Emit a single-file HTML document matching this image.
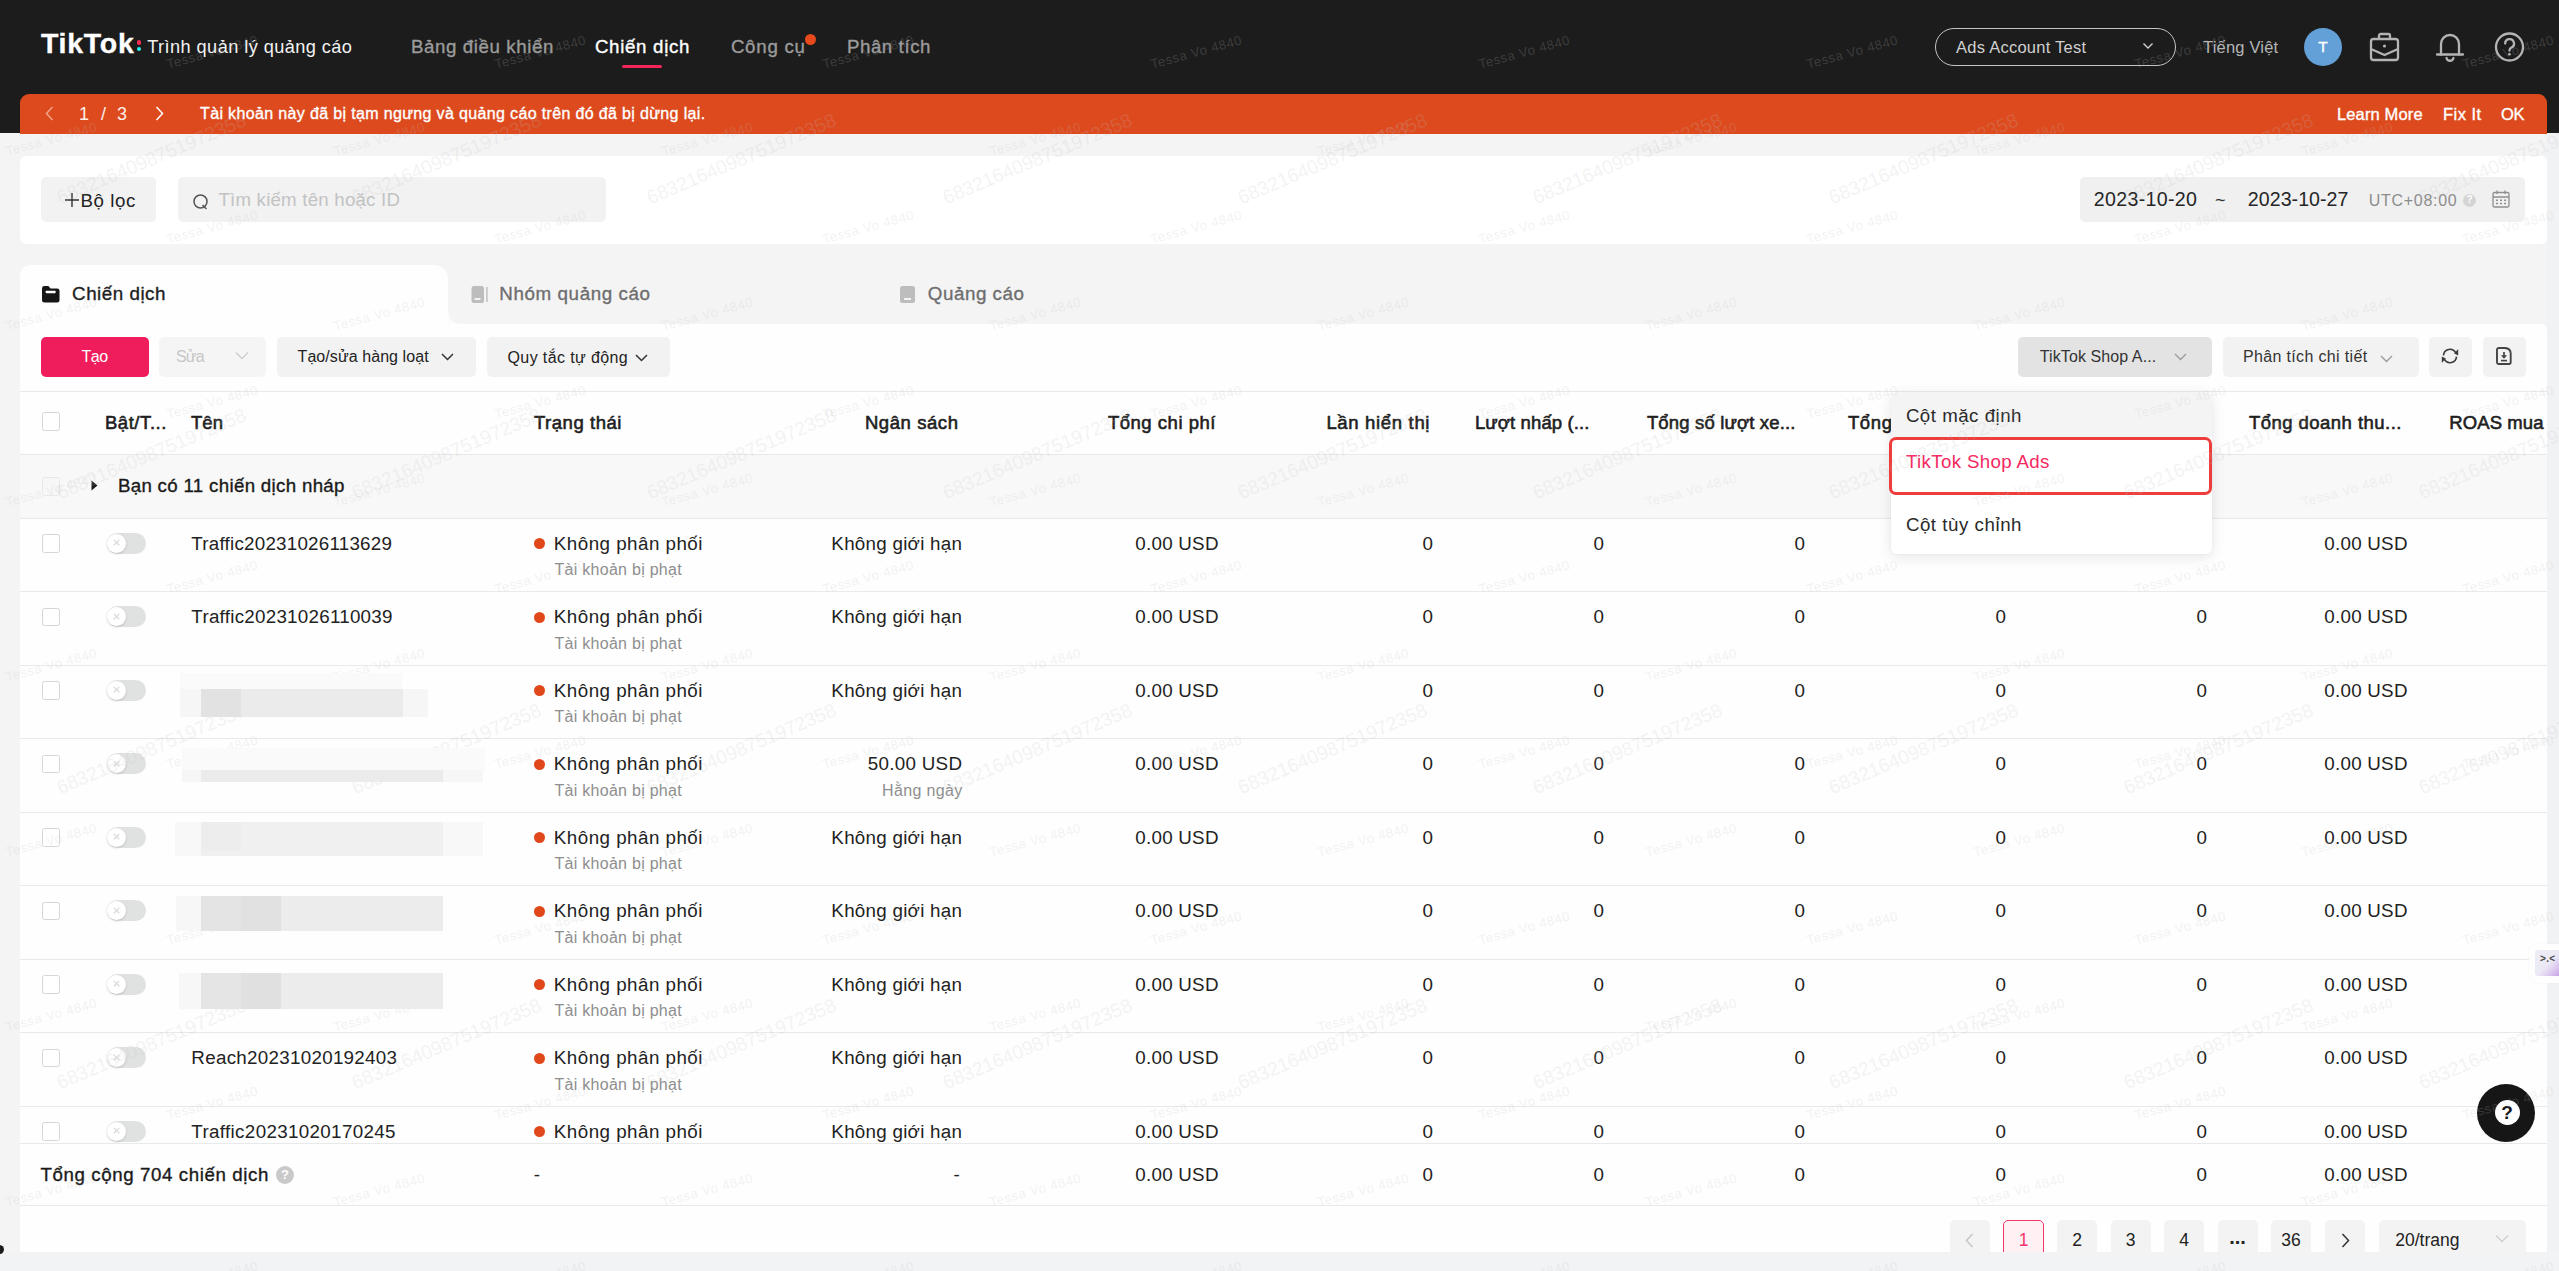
<!DOCTYPE html><html lang="vi"><head><meta charset="utf-8"><title>TikTok Ads Manager</title><style>
html,body{margin:0;padding:0}
body{width:2559px;height:1271px;overflow:hidden;position:relative;background:#f4f4f5;font-family:"Liberation Sans",sans-serif;}
.t{position:absolute;white-space:nowrap;}
.b{position:absolute;box-sizing:border-box;}
.m{-webkit-text-stroke:0.35px currentColor;}
.sb{-webkit-text-stroke:0.6px currentColor;}
svg{position:absolute;overflow:visible}
.wm{position:absolute;white-space:nowrap;transform-origin:left center;pointer-events:none;color:rgba(195,195,195,.23);}
</style></head><body>
<div class="b" style="left:0px;top:0px;width:2559px;height:133px;background:#1c1c1c;"></div>
<div class="t m" style="top:28.1px;font-size:28.5px;color:#fff;line-height:30px;font-weight:700;letter-spacing:0.756px;left:40.89px;">TikTok</div>
<div class="b" style="left:136.5px;top:40.4px;width:4.5px;height:4.5px;background:#fe2c55;border-radius:3px;"></div>
<div class="b" style="left:136.5px;top:46.5px;width:4.5px;height:4.5px;background:#25f4ee;border-radius:3px;"></div>
<div class="t" style="top:31.7px;font-size:18.2px;color:#f2f2f2;line-height:30px;letter-spacing:0.423px;left:147.21px;">Trình quản lý quảng cáo</div>
<div class="t m" style="top:31.5px;font-size:18.7px;color:#9b9b9b;line-height:30px;letter-spacing:0.611px;left:410.88px;">Bảng điều khiển</div>
<div class="t m" style="top:31.5px;font-size:18.7px;color:#fff;line-height:30px;letter-spacing:0.699px;left:594.88px;">Chiến dịch</div>
<div class="b" style="left:622px;top:65.4px;width:40px;height:2.9px;background:#f5245b;border-radius:1.5px;"></div>
<div class="t m" style="top:31.5px;font-size:18.7px;color:#9b9b9b;line-height:30px;letter-spacing:0.748px;left:730.88px;">Công cụ</div>
<div class="b" style="left:805px;top:34px;width:11px;height:11px;background:#e8491d;border-radius:6px;"></div>
<div class="t m" style="top:31.5px;font-size:18.7px;color:#9b9b9b;line-height:30px;letter-spacing:0.579px;left:846.88px;">Phân tích</div>
<div class="b" style="left:1935px;top:28px;width:241px;height:38px;background:transparent;border-radius:19px;border:1.5px solid #c4c4c4;"></div>
<div class="t" style="top:31.5px;font-size:16.5px;color:#d0d0d0;line-height:30px;letter-spacing:0.255px;left:1956.01px;">Ads Account Test</div>
<svg style="left:2142px;top:42px" width="12" height="8" viewBox="0 0 12 8"><path d="M1.5 1.5 L6 6 L10.5 1.5" fill="none" stroke="#cfcfcf" stroke-width="1.4"/></svg>
<div class="t" style="top:31.5px;font-size:16.5px;color:#b5b5b5;line-height:30px;letter-spacing:0.19px;left:2203.01px;">Tiếng Việt</div>
<div class="b" style="left:2304px;top:28px;width:38px;height:38px;background:#64a0d8;border-radius:19px;"></div>
<div class="t m" style="top:31.5px;font-size:15.5px;color:#fff;line-height:30px;left:2023px;width:600px;text-align:center;">T</div>
<svg style="left:2369px;top:31px" width="32" height="32" viewBox="0 0 32 32" fill="none" stroke="#b4b4b4" stroke-width="2.3" stroke-linejoin="round"><rect x="2" y="8" width="27" height="21" rx="2.5"/><path d="M10 8 V4.5 a1.5 1.5 0 0 1 1.5 -1.5 h8 a1.5 1.5 0 0 1 1.5 1.5 V8"/><path d="M2 18 L15.5 24 L29 18"/><circle cx="15.5" cy="15" r="1.6" fill="#b4b4b4" stroke="none"/></svg>
<svg style="left:2435px;top:31px" width="30" height="32" viewBox="0 0 30 32" fill="none" stroke="#b4b4b4" stroke-width="2.3" stroke-linecap="round" stroke-linejoin="round"><path d="M2 23.5 H28"/><path d="M6 23.5 V13 a9 9 0 0 1 18 0 V23.5"/><path d="M11.5 27 a3.6 3.6 0 0 0 7 0"/></svg>
<svg style="left:2494px;top:31px" width="32" height="32" viewBox="0 0 32 32" fill="none" stroke="#b4b4b4" stroke-width="2.3" stroke-linecap="round"><circle cx="15.5" cy="16" r="13.5"/><path d="M11.2 12.5 a4.4 4.4 0 1 1 6.3 4 c-1.3 0.7 -2 1.5 -2 3"/><circle cx="15.5" cy="23.2" r="1.3" fill="#b4b4b4" stroke="none"/></svg>
<div class="b" style="left:20px;top:94px;width:2527px;height:39.5px;background:#dd4a1d;border-radius:9px 9px 0 0;"></div>
<svg style="left:45px;top:106px" width="9" height="15" viewBox="0 0 9 15"><path d="M7.5 1 L1.5 7.5 L7.5 14" fill="none" stroke="#f0a58a" stroke-width="1.5"/></svg>
<div class="t" style="top:98.5px;font-size:18px;color:#fdeee8;line-height:30px;left:78.92px;">1</div>
<div class="t" style="top:98.5px;font-size:18px;color:#fdeee8;line-height:30px;left:100.92px;">/</div>
<div class="t" style="top:98.5px;font-size:18px;color:#fdeee8;line-height:30px;left:116.92px;">3</div>
<svg style="left:155px;top:106px" width="9" height="15" viewBox="0 0 9 15"><path d="M1.5 1 L7.5 7.5 L1.5 14" fill="none" stroke="#fff" stroke-width="1.5"/></svg>
<div class="t m" style="top:98.5px;font-size:16px;color:#fff;line-height:30px;letter-spacing:0.353px;left:200.04px;">Tài khoản này đã bị tạm ngưng và quảng cáo trên đó đã bị dừng lại.</div>
<div class="t m" style="top:98.5px;font-size:16.5px;color:#fff;line-height:30px;letter-spacing:0.134px;left:2337.01px;">Learn More</div>
<div class="t m" style="top:98.5px;font-size:16.5px;color:#fff;line-height:30px;letter-spacing:0.47px;left:2443.01px;">Fix It</div>
<div class="t m" style="top:98.5px;font-size:16.5px;color:#fff;line-height:30px;letter-spacing:-0.244px;left:2501.01px;">OK</div>
<div class="b" style="left:20px;top:155.5px;width:2527px;height:88px;background:#fff;border-radius:6px;"></div>
<div class="b" style="left:41px;top:177px;width:115px;height:44.5px;background:#f2f2f2;border-radius:5px;"></div>
<svg style="left:65.2px;top:192.8px" width="14" height="14" viewBox="0 0 14 14"><path d="M7 0 V14 M0 7 H14" stroke="#333" stroke-width="1.4" fill="none"/></svg>
<div class="t" style="top:185.5px;font-size:18.7px;color:#222;line-height:30px;letter-spacing:0.629px;left:80.38px;">Bộ lọc</div>
<div class="b" style="left:178px;top:177px;width:428px;height:44.5px;background:#f2f2f2;border-radius:5px;"></div>
<svg style="left:192px;top:193px" width="18" height="18" viewBox="0 0 18 18" fill="none" stroke="#555" stroke-width="1.5"><circle cx="8.5" cy="8.5" r="6.5"/><path d="M10.5 12 L14.5 16"/></svg>
<div class="t" style="top:184.5px;font-size:18.7px;color:#c2c2c2;line-height:30px;letter-spacing:0.211px;left:218.38px;">Tìm kiếm tên hoặc ID</div>
<div class="b" style="left:2080px;top:177px;width:445px;height:44.5px;background:#f0f0f0;border-radius:5px;"></div>
<div class="t" style="top:184.0px;font-size:19.6px;color:#262626;line-height:30px;letter-spacing:0.318px;left:2093.82px;">2023-10-20</div>
<div class="t" style="top:184.5px;font-size:18px;color:#333;line-height:30px;left:2214.92px;">~</div>
<div class="t" style="top:184.0px;font-size:19.6px;color:#262626;line-height:30px;letter-spacing:0.041px;left:2247.82px;">2023-10-27</div>
<div class="t" style="top:185.5px;font-size:16px;color:#8c8c8c;line-height:30px;letter-spacing:0.704px;left:2368.74px;">UTC+08:00</div>
<div class="b" style="left:2463px;top:193.5px;width:13px;height:13px;background:#d4d4d4;border-radius:7px;"></div>
<div class="t" style="top:185.0px;font-size:10px;color:#fff;line-height:30px;font-weight:700;left:2169.5px;width:600px;text-align:center;">?</div>
<svg style="left:2492px;top:190px" width="18" height="18" viewBox="0 0 18 18" fill="none" stroke="#8f8f8f" stroke-width="1.3"><rect x="1" y="2.5" width="16" height="14.5" rx="1.5"/><path d="M1 7 H17 M5 0.5 V4 M13 0.5 V4"/><path d="M4 10.2 h2 M8 10.2 h2 M12 10.2 h2 M4 13.5 h2 M8 13.5 h2 M12 13.5 h2" stroke-width="1.6"/></svg>
<div class="b" style="left:20px;top:265px;width:428px;height:62px;background:#fefefe;border-radius:10px 14px 0 0;"></div>
<svg style="left:448px;top:309px" width="15" height="15" viewBox="0 0 15 15"><path d="M0 0 C0 9 5 15 15 15 L0 15 Z" fill="#fcfcfc"/></svg>
<svg style="left:42.4px;top:285.2px" width="18" height="18" viewBox="0 0 19 19"><path d="M0 3.5 a2.5 2.5 0 0 1 2.5 -2.5 h4.2 l2.3 2.6 h7 a2.5 2.5 0 0 1 2.5 2.5 v9.9 a2.5 2.5 0 0 1 -2.5 2.5 h-13.5 a2.5 2.5 0 0 1 -2.5 -2.5 z" fill="#161616"/><rect x="4" y="6.2" width="10.3" height="2.5" rx="0.5" fill="#fff"/></svg>
<div class="t m" style="top:279.0px;font-size:18.8px;color:#1f1f1f;line-height:30px;letter-spacing:0.517px;left:72.07px;">Chiến dịch</div>
<svg style="left:471px;top:285px" width="19" height="19" viewBox="0 0 19 19"><rect x="0.5" y="1" width="12.5" height="17" rx="2.5" fill="#bdbdbd"/><rect x="3.5" y="13" width="6" height="2" fill="#f3f3f3"/><rect x="15" y="2" width="1.8" height="15" fill="#c9c9c9"/></svg>
<div class="t m" style="top:279.0px;font-size:18.8px;color:#6e6e6e;line-height:30px;letter-spacing:0.581px;left:499.37px;">Nhóm quảng cáo</div>
<svg style="left:899px;top:285px" width="17" height="19" viewBox="0 0 17 19"><rect x="1" y="1" width="15" height="17" rx="2.5" fill="#bdbdbd"/><rect x="5" y="13" width="7" height="2" fill="#f3f3f3"/></svg>
<div class="t m" style="top:279.0px;font-size:18.8px;color:#6e6e6e;line-height:30px;letter-spacing:0.526px;left:927.87px;">Quảng cáo</div>
<div class="b" style="left:20px;top:323.5px;width:2527px;height:929px;background:#fefefe;border-radius:0 6px 0 0;"></div>
<div class="b" style="left:41px;top:337px;width:107.5px;height:40px;background:#f01d5c;border-radius:5px;"></div>
<div class="t" style="top:342.0px;font-size:16px;color:#fff;line-height:30px;letter-spacing:-0.489px;left:81.54px;">Tạo</div>
<div class="b" style="left:159px;top:337px;width:107px;height:40px;background:#f5f5f5;border-radius:5px;"></div>
<div class="t" style="top:342.0px;font-size:16px;color:#c6c6c6;line-height:30px;letter-spacing:-0.841px;left:176.04px;">Sửa</div>
<svg style="left:235px;top:351px" width="14" height="9" viewBox="0 0 14 9"><path d="M1 1.5 L7 7.5 L13 1.5" fill="none" stroke="#cfcfcf" stroke-width="1.4"/></svg>
<div class="b" style="left:277px;top:337px;width:199px;height:40px;background:#f2f2f2;border-radius:5px;"></div>
<div class="t" style="top:342.0px;font-size:16px;color:#222;line-height:30px;letter-spacing:0.075px;left:297.54px;">Tạo/sửa hàng loạt</div>
<svg style="left:441px;top:353px" width="13" height="8" viewBox="0 0 13 8"><path d="M1 1 L6.5 6.5 L12 1" fill="none" stroke="#333" stroke-width="1.5"/></svg>
<div class="b" style="left:487px;top:337px;width:183px;height:40px;background:#f2f2f2;border-radius:5px;"></div>
<div class="t" style="top:343.0px;font-size:16px;color:#222;line-height:30px;letter-spacing:0.38px;left:507.54px;">Quy tắc tự động</div>
<svg style="left:635px;top:353.5px" width="13" height="8" viewBox="0 0 13 8"><path d="M1 1 L6.5 6.5 L12 1" fill="none" stroke="#333" stroke-width="1.5"/></svg>
<div class="b" style="left:2018px;top:337px;width:194px;height:40px;background:#e3e3e3;border-radius:5px;"></div>
<div class="t" style="top:342.0px;font-size:16px;color:#333;line-height:30px;letter-spacing:0.086px;left:2039.84px;">TikTok Shop A...</div>
<svg style="left:2174px;top:353px" width="13" height="8" viewBox="0 0 13 8"><path d="M1 1 L6.5 6.5 L12 1" fill="none" stroke="#9a9a9a" stroke-width="1.3"/></svg>
<div class="b" style="left:2223px;top:337px;width:195.5px;height:40px;background:#f2f2f2;border-radius:5px;"></div>
<div class="t" style="top:342.0px;font-size:16px;color:#333;line-height:30px;letter-spacing:0.341px;left:2243.04px;">Phân tích chi tiết</div>
<svg style="left:2380px;top:355px" width="13" height="8" viewBox="0 0 13 8"><path d="M1 1 L6.5 6.5 L12 1" fill="none" stroke="#9a9a9a" stroke-width="1.3"/></svg>
<div class="b" style="left:2429px;top:337px;width:43px;height:40px;background:#f2f2f2;border-radius:5px;"></div>
<svg style="left:2450.4px;top:355.8px" width="1" height="1" viewBox="0 0 1 1" fill="none" stroke="#3a3a3a" stroke-width="1.6"><path d="M-6.5 -0.6 A6.5 6.5 0 0 1 5.6 -3.4"/><path d="M6.5 0.6 A6.5 6.5 0 0 1 -5.6 3.4"/><path d="M8.2 -7 L8.2 -0.4 L4.2 -2.6 Z" fill="#3a3a3a" stroke="none"/><path d="M-8.2 7 L-8.2 0.4 L-4.2 2.6 Z" fill="#3a3a3a" stroke="none"/></svg>
<div class="b" style="left:2482.5px;top:337px;width:43px;height:40px;background:#f2f2f2;border-radius:5px;"></div>
<svg style="left:2495.9px;top:346.5px" width="16" height="18" viewBox="0 0 16 18" fill="none" stroke="#444" stroke-width="1.9" stroke-linejoin="round"><path d="M1 2.8 a1.8 1.8 0 0 1 1.8 -1.8 h6.2 q5.6 0.4 5.7 5.6 v8.6 a1.8 1.8 0 0 1 -1.8 1.8 h-10.1 a1.8 1.8 0 0 1 -1.8 -1.8 z"/><path d="M8 5 v4.5" stroke-width="1.7"/><path d="M4.9 8.3 h6.2 l-3.1 3.4 z" fill="#444" stroke="none"/><path d="M5 13.6 h6" stroke-width="1.6"/></svg>
<div class="b" style="left:20px;top:390.5px;width:2527px;height:1.3px;background:#e7e9eb;"></div>
<div class="b" style="left:41.5px;top:412px;width:18.5px;height:18.5px;background:#fff;border-radius:2.5px;border:1.4px solid #d3d7da;"></div>
<div class="t sb" style="top:407.5px;font-size:18.5px;color:#1f1f1f;line-height:30px;letter-spacing:0.575px;left:104.89px;">Bật/T...</div>
<div class="t sb" style="top:407.5px;font-size:18.5px;color:#1f1f1f;line-height:30px;letter-spacing:0.105px;left:190.89px;">Tên</div>
<div class="t sb" style="top:407.5px;font-size:18.5px;color:#1f1f1f;line-height:30px;letter-spacing:0.555px;left:533.89px;">Trạng thái</div>
<div class="t sb" style="top:407.5px;font-size:18.5px;color:#1f1f1f;line-height:30px;letter-spacing:0.581px;left:864.89px;">Ngân sách</div>
<div class="t sb" style="top:407.5px;font-size:18.5px;color:#1f1f1f;line-height:30px;letter-spacing:0.525px;left:1107.89px;">Tổng chi phí</div>
<div class="t sb" style="top:407.5px;font-size:18.5px;color:#1f1f1f;line-height:30px;letter-spacing:0.675px;left:1326.39px;">Lần hiển thị</div>
<div class="t sb" style="top:407.5px;font-size:18.5px;color:#1f1f1f;line-height:30px;letter-spacing:0.125px;left:1474.89px;">Lượt nhấp (...</div>
<div class="t sb" style="top:407.5px;font-size:18.5px;color:#1f1f1f;line-height:30px;letter-spacing:0.161px;left:1646.89px;">Tổng số lượt xe...</div>
<div class="t sb" style="top:407.5px;font-size:18.5px;color:#1f1f1f;line-height:30px;letter-spacing:0.643px;left:1847.89px;">Tổng</div>
<div class="t sb" style="top:407.5px;font-size:18.5px;color:#1f1f1f;line-height:30px;letter-spacing:0.473px;left:2248.89px;">Tổng doanh thu...</div>
<div class="t sb" style="top:407.5px;font-size:18.5px;color:#1f1f1f;line-height:30px;letter-spacing:0.091px;left:2449.29px;">ROAS mua</div>
<div class="b" style="left:20px;top:453.5px;width:2527px;height:1.3px;background:#e7e9eb;"></div>
<div class="b" style="left:20px;top:455px;width:2527px;height:63px;background:#f8f8f8;"></div>
<div class="b" style="left:41.5px;top:477px;width:18.5px;height:18.5px;background:#f7f7f7;border-radius:2.5px;border:1.4px solid #e6e8ea;"></div>
<svg style="left:91px;top:480px" width="7" height="11" viewBox="0 0 7 11"><path d="M0.5 0.5 L6.5 5.5 L0.5 10.5 Z" fill="#1a1a1a"/></svg>
<div class="t m" style="top:470.5px;font-size:18.7px;color:#1a1a1a;line-height:30px;letter-spacing:0.322px;left:117.88px;">Bạn có 11 chiến dịch nháp</div>
<div class="b" style="left:20px;top:517.5px;width:2527px;height:1.3px;background:#e7e9eb;"></div>
<div class="b" style="left:41.5px;top:534px;width:18.5px;height:18.5px;background:#fff;border-radius:2.5px;border:1.4px solid #d3d7da;"></div>
<div class="b" style="left:106.7px;top:532.5px;width:39px;height:21px;background:#e0e1e1;border-radius:11px;"></div>
<div class="b" style="left:106.7px;top:533.5px;width:19px;height:19px;background:#fff;border-radius:10px;box-shadow:0 1px 2.5px rgba(0,0,0,.16);"></div>
<svg style="left:112.6px;top:539.4px" width="7.2" height="7.2" viewBox="0 0 8 8"><path d="M1 1 L7 7 M7 1 L1 7" stroke="#dadada" stroke-width="1.4" fill="none"/></svg>
<div class="t" style="top:528.9px;font-size:18.8px;color:#222;line-height:30px;letter-spacing:0.226px;left:191.37px;">Traffic20231026113629</div>
<div class="b" style="left:534px;top:538.4px;width:11px;height:11px;background:#e0481c;border-radius:6px;"></div>
<div class="t" style="top:528.9px;font-size:18.8px;color:#222;line-height:30px;letter-spacing:0.468px;left:553.87px;">Không phân phối</div>
<div class="t" style="top:555.2px;font-size:16px;color:#8e8e8e;line-height:30px;letter-spacing:0.272px;left:554.54px;">Tài khoản bị phạt</div>
<div class="t" style="top:528.9px;font-size:18.8px;color:#222;line-height:30px;letter-spacing:0.262px;left:831.37px;">Không giới hạn</div>
<div class="t" style="top:528.9px;font-size:18.8px;color:#222;line-height:30px;letter-spacing:0.237px;left:1135.37px;">0.00 USD</div>
<div class="t" style="top:528.9px;font-size:18.8px;color:#222;line-height:30px;right:1126.07px;">0</div>
<div class="t" style="top:528.9px;font-size:18.8px;color:#222;line-height:30px;right:955.07px;">0</div>
<div class="t" style="top:528.9px;font-size:18.8px;color:#222;line-height:30px;right:754.07px;">0</div>
<div class="t" style="top:528.9px;font-size:18.8px;color:#222;line-height:30px;letter-spacing:0.237px;left:2324.37px;">0.00 USD</div>
<div class="b" style="left:20px;top:591.0px;width:2527px;height:1.3px;background:#e7e9eb;"></div>
<div class="b" style="left:41.5px;top:607.5px;width:18.5px;height:18.5px;background:#fff;border-radius:2.5px;border:1.4px solid #d3d7da;"></div>
<div class="b" style="left:106.7px;top:606.0px;width:39px;height:21px;background:#e0e1e1;border-radius:11px;"></div>
<div class="b" style="left:106.7px;top:607.0px;width:19px;height:19px;background:#fff;border-radius:10px;box-shadow:0 1px 2.5px rgba(0,0,0,.16);"></div>
<svg style="left:112.6px;top:612.9px" width="7.2" height="7.2" viewBox="0 0 8 8"><path d="M1 1 L7 7 M7 1 L1 7" stroke="#dadada" stroke-width="1.4" fill="none"/></svg>
<div class="t" style="top:602.4px;font-size:18.8px;color:#222;line-height:30px;letter-spacing:0.256px;left:191.37px;">Traffic20231026110039</div>
<div class="b" style="left:534px;top:611.9px;width:11px;height:11px;background:#e0481c;border-radius:6px;"></div>
<div class="t" style="top:602.4px;font-size:18.8px;color:#222;line-height:30px;letter-spacing:0.468px;left:553.87px;">Không phân phối</div>
<div class="t" style="top:628.7px;font-size:16px;color:#8e8e8e;line-height:30px;letter-spacing:0.272px;left:554.54px;">Tài khoản bị phạt</div>
<div class="t" style="top:602.4px;font-size:18.8px;color:#222;line-height:30px;letter-spacing:0.262px;left:831.37px;">Không giới hạn</div>
<div class="t" style="top:602.4px;font-size:18.8px;color:#222;line-height:30px;letter-spacing:0.237px;left:1135.37px;">0.00 USD</div>
<div class="t" style="top:602.4px;font-size:18.8px;color:#222;line-height:30px;right:1126.07px;">0</div>
<div class="t" style="top:602.4px;font-size:18.8px;color:#222;line-height:30px;right:955.07px;">0</div>
<div class="t" style="top:602.4px;font-size:18.8px;color:#222;line-height:30px;right:754.07px;">0</div>
<div class="t" style="top:602.4px;font-size:18.8px;color:#222;line-height:30px;right:553.07px;">0</div>
<div class="t" style="top:602.4px;font-size:18.8px;color:#222;line-height:30px;right:352.07px;">0</div>
<div class="t" style="top:602.4px;font-size:18.8px;color:#222;line-height:30px;letter-spacing:0.237px;left:2324.37px;">0.00 USD</div>
<div class="b" style="left:20px;top:664.5px;width:2527px;height:1.3px;background:#e7e9eb;"></div>
<div class="b" style="left:41.5px;top:681px;width:18.5px;height:18.5px;background:#fff;border-radius:2.5px;border:1.4px solid #d3d7da;"></div>
<div class="b" style="left:106.7px;top:679.5px;width:39px;height:21px;background:#e0e1e1;border-radius:11px;"></div>
<div class="b" style="left:106.7px;top:680.5px;width:19px;height:19px;background:#fff;border-radius:10px;box-shadow:0 1px 2.5px rgba(0,0,0,.16);"></div>
<svg style="left:112.6px;top:686.4px" width="7.2" height="7.2" viewBox="0 0 8 8"><path d="M1 1 L7 7 M7 1 L1 7" stroke="#dadada" stroke-width="1.4" fill="none"/></svg>
<div class="b" style="left:534px;top:685.4px;width:11px;height:11px;background:#e0481c;border-radius:6px;"></div>
<div class="t" style="top:675.9px;font-size:18.8px;color:#222;line-height:30px;letter-spacing:0.468px;left:553.87px;">Không phân phối</div>
<div class="t" style="top:702.2px;font-size:16px;color:#8e8e8e;line-height:30px;letter-spacing:0.272px;left:554.54px;">Tài khoản bị phạt</div>
<div class="t" style="top:675.9px;font-size:18.8px;color:#222;line-height:30px;letter-spacing:0.262px;left:831.37px;">Không giới hạn</div>
<div class="t" style="top:675.9px;font-size:18.8px;color:#222;line-height:30px;letter-spacing:0.237px;left:1135.37px;">0.00 USD</div>
<div class="t" style="top:675.9px;font-size:18.8px;color:#222;line-height:30px;right:1126.07px;">0</div>
<div class="t" style="top:675.9px;font-size:18.8px;color:#222;line-height:30px;right:955.07px;">0</div>
<div class="t" style="top:675.9px;font-size:18.8px;color:#222;line-height:30px;right:754.07px;">0</div>
<div class="t" style="top:675.9px;font-size:18.8px;color:#222;line-height:30px;right:553.07px;">0</div>
<div class="t" style="top:675.9px;font-size:18.8px;color:#222;line-height:30px;right:352.07px;">0</div>
<div class="t" style="top:675.9px;font-size:18.8px;color:#222;line-height:30px;letter-spacing:0.237px;left:2324.37px;">0.00 USD</div>
<div class="b" style="left:20px;top:738.0px;width:2527px;height:1.3px;background:#e7e9eb;"></div>
<div class="b" style="left:41.5px;top:754.5px;width:18.5px;height:18.5px;background:#fff;border-radius:2.5px;border:1.4px solid #d3d7da;"></div>
<div class="b" style="left:106.7px;top:753.0px;width:39px;height:21px;background:#e0e1e1;border-radius:11px;"></div>
<div class="b" style="left:106.7px;top:754.0px;width:19px;height:19px;background:#fff;border-radius:10px;box-shadow:0 1px 2.5px rgba(0,0,0,.16);"></div>
<svg style="left:112.6px;top:759.9px" width="7.2" height="7.2" viewBox="0 0 8 8"><path d="M1 1 L7 7 M7 1 L1 7" stroke="#dadada" stroke-width="1.4" fill="none"/></svg>
<div class="b" style="left:534px;top:758.9px;width:11px;height:11px;background:#e0481c;border-radius:6px;"></div>
<div class="t" style="top:749.4px;font-size:18.8px;color:#222;line-height:30px;letter-spacing:0.468px;left:553.87px;">Không phân phối</div>
<div class="t" style="top:775.7px;font-size:16px;color:#8e8e8e;line-height:30px;letter-spacing:0.272px;left:554.54px;">Tài khoản bị phạt</div>
<div class="t" style="top:749.4px;font-size:18.8px;color:#222;line-height:30px;letter-spacing:0.278px;left:867.87px;">50.00 USD</div>
<div class="t" style="top:775.7px;font-size:16px;color:#8e8e8e;line-height:30px;letter-spacing:0.339px;left:882.04px;">Hằng ngày</div>
<div class="t" style="top:749.4px;font-size:18.8px;color:#222;line-height:30px;letter-spacing:0.237px;left:1135.37px;">0.00 USD</div>
<div class="t" style="top:749.4px;font-size:18.8px;color:#222;line-height:30px;right:1126.07px;">0</div>
<div class="t" style="top:749.4px;font-size:18.8px;color:#222;line-height:30px;right:955.07px;">0</div>
<div class="t" style="top:749.4px;font-size:18.8px;color:#222;line-height:30px;right:754.07px;">0</div>
<div class="t" style="top:749.4px;font-size:18.8px;color:#222;line-height:30px;right:553.07px;">0</div>
<div class="t" style="top:749.4px;font-size:18.8px;color:#222;line-height:30px;right:352.07px;">0</div>
<div class="t" style="top:749.4px;font-size:18.8px;color:#222;line-height:30px;letter-spacing:0.237px;left:2324.37px;">0.00 USD</div>
<div class="b" style="left:20px;top:811.5px;width:2527px;height:1.3px;background:#e7e9eb;"></div>
<div class="b" style="left:41.5px;top:828px;width:18.5px;height:18.5px;background:#fff;border-radius:2.5px;border:1.4px solid #d3d7da;"></div>
<div class="b" style="left:106.7px;top:826.5px;width:39px;height:21px;background:#e0e1e1;border-radius:11px;"></div>
<div class="b" style="left:106.7px;top:827.5px;width:19px;height:19px;background:#fff;border-radius:10px;box-shadow:0 1px 2.5px rgba(0,0,0,.16);"></div>
<svg style="left:112.6px;top:833.4px" width="7.2" height="7.2" viewBox="0 0 8 8"><path d="M1 1 L7 7 M7 1 L1 7" stroke="#dadada" stroke-width="1.4" fill="none"/></svg>
<div class="b" style="left:534px;top:832.4px;width:11px;height:11px;background:#e0481c;border-radius:6px;"></div>
<div class="t" style="top:822.9px;font-size:18.8px;color:#222;line-height:30px;letter-spacing:0.468px;left:553.87px;">Không phân phối</div>
<div class="t" style="top:849.2px;font-size:16px;color:#8e8e8e;line-height:30px;letter-spacing:0.272px;left:554.54px;">Tài khoản bị phạt</div>
<div class="t" style="top:822.9px;font-size:18.8px;color:#222;line-height:30px;letter-spacing:0.262px;left:831.37px;">Không giới hạn</div>
<div class="t" style="top:822.9px;font-size:18.8px;color:#222;line-height:30px;letter-spacing:0.237px;left:1135.37px;">0.00 USD</div>
<div class="t" style="top:822.9px;font-size:18.8px;color:#222;line-height:30px;right:1126.07px;">0</div>
<div class="t" style="top:822.9px;font-size:18.8px;color:#222;line-height:30px;right:955.07px;">0</div>
<div class="t" style="top:822.9px;font-size:18.8px;color:#222;line-height:30px;right:754.07px;">0</div>
<div class="t" style="top:822.9px;font-size:18.8px;color:#222;line-height:30px;right:553.07px;">0</div>
<div class="t" style="top:822.9px;font-size:18.8px;color:#222;line-height:30px;right:352.07px;">0</div>
<div class="t" style="top:822.9px;font-size:18.8px;color:#222;line-height:30px;letter-spacing:0.237px;left:2324.37px;">0.00 USD</div>
<div class="b" style="left:20px;top:885.0px;width:2527px;height:1.3px;background:#e7e9eb;"></div>
<div class="b" style="left:41.5px;top:901.5px;width:18.5px;height:18.5px;background:#fff;border-radius:2.5px;border:1.4px solid #d3d7da;"></div>
<div class="b" style="left:106.7px;top:900.0px;width:39px;height:21px;background:#e0e1e1;border-radius:11px;"></div>
<div class="b" style="left:106.7px;top:901.0px;width:19px;height:19px;background:#fff;border-radius:10px;box-shadow:0 1px 2.5px rgba(0,0,0,.16);"></div>
<svg style="left:112.6px;top:906.9px" width="7.2" height="7.2" viewBox="0 0 8 8"><path d="M1 1 L7 7 M7 1 L1 7" stroke="#dadada" stroke-width="1.4" fill="none"/></svg>
<div class="b" style="left:534px;top:905.9px;width:11px;height:11px;background:#e0481c;border-radius:6px;"></div>
<div class="t" style="top:896.4px;font-size:18.8px;color:#222;line-height:30px;letter-spacing:0.468px;left:553.87px;">Không phân phối</div>
<div class="t" style="top:922.7px;font-size:16px;color:#8e8e8e;line-height:30px;letter-spacing:0.272px;left:554.54px;">Tài khoản bị phạt</div>
<div class="t" style="top:896.4px;font-size:18.8px;color:#222;line-height:30px;letter-spacing:0.262px;left:831.37px;">Không giới hạn</div>
<div class="t" style="top:896.4px;font-size:18.8px;color:#222;line-height:30px;letter-spacing:0.237px;left:1135.37px;">0.00 USD</div>
<div class="t" style="top:896.4px;font-size:18.8px;color:#222;line-height:30px;right:1126.07px;">0</div>
<div class="t" style="top:896.4px;font-size:18.8px;color:#222;line-height:30px;right:955.07px;">0</div>
<div class="t" style="top:896.4px;font-size:18.8px;color:#222;line-height:30px;right:754.07px;">0</div>
<div class="t" style="top:896.4px;font-size:18.8px;color:#222;line-height:30px;right:553.07px;">0</div>
<div class="t" style="top:896.4px;font-size:18.8px;color:#222;line-height:30px;right:352.07px;">0</div>
<div class="t" style="top:896.4px;font-size:18.8px;color:#222;line-height:30px;letter-spacing:0.237px;left:2324.37px;">0.00 USD</div>
<div class="b" style="left:20px;top:958.5px;width:2527px;height:1.3px;background:#e7e9eb;"></div>
<div class="b" style="left:41.5px;top:975px;width:18.5px;height:18.5px;background:#fff;border-radius:2.5px;border:1.4px solid #d3d7da;"></div>
<div class="b" style="left:106.7px;top:973.5px;width:39px;height:21px;background:#e0e1e1;border-radius:11px;"></div>
<div class="b" style="left:106.7px;top:974.5px;width:19px;height:19px;background:#fff;border-radius:10px;box-shadow:0 1px 2.5px rgba(0,0,0,.16);"></div>
<svg style="left:112.6px;top:980.4px" width="7.2" height="7.2" viewBox="0 0 8 8"><path d="M1 1 L7 7 M7 1 L1 7" stroke="#dadada" stroke-width="1.4" fill="none"/></svg>
<div class="b" style="left:534px;top:979.4px;width:11px;height:11px;background:#e0481c;border-radius:6px;"></div>
<div class="t" style="top:969.9px;font-size:18.8px;color:#222;line-height:30px;letter-spacing:0.468px;left:553.87px;">Không phân phối</div>
<div class="t" style="top:996.2px;font-size:16px;color:#8e8e8e;line-height:30px;letter-spacing:0.272px;left:554.54px;">Tài khoản bị phạt</div>
<div class="t" style="top:969.9px;font-size:18.8px;color:#222;line-height:30px;letter-spacing:0.262px;left:831.37px;">Không giới hạn</div>
<div class="t" style="top:969.9px;font-size:18.8px;color:#222;line-height:30px;letter-spacing:0.237px;left:1135.37px;">0.00 USD</div>
<div class="t" style="top:969.9px;font-size:18.8px;color:#222;line-height:30px;right:1126.07px;">0</div>
<div class="t" style="top:969.9px;font-size:18.8px;color:#222;line-height:30px;right:955.07px;">0</div>
<div class="t" style="top:969.9px;font-size:18.8px;color:#222;line-height:30px;right:754.07px;">0</div>
<div class="t" style="top:969.9px;font-size:18.8px;color:#222;line-height:30px;right:553.07px;">0</div>
<div class="t" style="top:969.9px;font-size:18.8px;color:#222;line-height:30px;right:352.07px;">0</div>
<div class="t" style="top:969.9px;font-size:18.8px;color:#222;line-height:30px;letter-spacing:0.237px;left:2324.37px;">0.00 USD</div>
<div class="b" style="left:20px;top:1032.0px;width:2527px;height:1.3px;background:#e7e9eb;"></div>
<div class="b" style="left:41.5px;top:1048.5px;width:18.5px;height:18.5px;background:#fff;border-radius:2.5px;border:1.4px solid #d3d7da;"></div>
<div class="b" style="left:106.7px;top:1047.0px;width:39px;height:21px;background:#e0e1e1;border-radius:11px;"></div>
<div class="b" style="left:106.7px;top:1048.0px;width:19px;height:19px;background:#fff;border-radius:10px;box-shadow:0 1px 2.5px rgba(0,0,0,.16);"></div>
<svg style="left:112.6px;top:1053.9px" width="7.2" height="7.2" viewBox="0 0 8 8"><path d="M1 1 L7 7 M7 1 L1 7" stroke="#dadada" stroke-width="1.4" fill="none"/></svg>
<div class="t" style="top:1043.4px;font-size:18.8px;color:#222;line-height:30px;letter-spacing:0.282px;left:191.37px;">Reach20231020192403</div>
<div class="b" style="left:534px;top:1052.9px;width:11px;height:11px;background:#e0481c;border-radius:6px;"></div>
<div class="t" style="top:1043.4px;font-size:18.8px;color:#222;line-height:30px;letter-spacing:0.468px;left:553.87px;">Không phân phối</div>
<div class="t" style="top:1069.7px;font-size:16px;color:#8e8e8e;line-height:30px;letter-spacing:0.272px;left:554.54px;">Tài khoản bị phạt</div>
<div class="t" style="top:1043.4px;font-size:18.8px;color:#222;line-height:30px;letter-spacing:0.262px;left:831.37px;">Không giới hạn</div>
<div class="t" style="top:1043.4px;font-size:18.8px;color:#222;line-height:30px;letter-spacing:0.237px;left:1135.37px;">0.00 USD</div>
<div class="t" style="top:1043.4px;font-size:18.8px;color:#222;line-height:30px;right:1126.07px;">0</div>
<div class="t" style="top:1043.4px;font-size:18.8px;color:#222;line-height:30px;right:955.07px;">0</div>
<div class="t" style="top:1043.4px;font-size:18.8px;color:#222;line-height:30px;right:754.07px;">0</div>
<div class="t" style="top:1043.4px;font-size:18.8px;color:#222;line-height:30px;right:553.07px;">0</div>
<div class="t" style="top:1043.4px;font-size:18.8px;color:#222;line-height:30px;right:352.07px;">0</div>
<div class="t" style="top:1043.4px;font-size:18.8px;color:#222;line-height:30px;letter-spacing:0.237px;left:2324.37px;">0.00 USD</div>
<div class="b" style="left:20px;top:1105.5px;width:2527px;height:1.3px;background:#e7e9eb;"></div>
<div class="b" style="left:41.5px;top:1122px;width:18.5px;height:18.5px;background:#fff;border-radius:2.5px;border:1.4px solid #d3d7da;"></div>
<div class="b" style="left:106.7px;top:1120.5px;width:39px;height:21px;background:#e0e1e1;border-radius:11px;"></div>
<div class="b" style="left:106.7px;top:1121.5px;width:19px;height:19px;background:#fff;border-radius:10px;box-shadow:0 1px 2.5px rgba(0,0,0,.16);"></div>
<svg style="left:112.6px;top:1127.4px" width="7.2" height="7.2" viewBox="0 0 8 8"><path d="M1 1 L7 7 M7 1 L1 7" stroke="#dadada" stroke-width="1.4" fill="none"/></svg>
<div class="t" style="top:1116.9px;font-size:18.8px;color:#222;line-height:30px;letter-spacing:0.336px;left:191.37px;">Traffic20231020170245</div>
<div class="b" style="left:534px;top:1126.4px;width:11px;height:11px;background:#e0481c;border-radius:6px;"></div>
<div class="t" style="top:1116.9px;font-size:18.8px;color:#222;line-height:30px;letter-spacing:0.468px;left:553.87px;">Không phân phối</div>
<div class="t" style="top:1116.9px;font-size:18.8px;color:#222;line-height:30px;letter-spacing:0.262px;left:831.37px;">Không giới hạn</div>
<div class="t" style="top:1116.9px;font-size:18.8px;color:#222;line-height:30px;letter-spacing:0.237px;left:1135.37px;">0.00 USD</div>
<div class="t" style="top:1116.9px;font-size:18.8px;color:#222;line-height:30px;right:1126.07px;">0</div>
<div class="t" style="top:1116.9px;font-size:18.8px;color:#222;line-height:30px;right:955.07px;">0</div>
<div class="t" style="top:1116.9px;font-size:18.8px;color:#222;line-height:30px;right:754.07px;">0</div>
<div class="t" style="top:1116.9px;font-size:18.8px;color:#222;line-height:30px;right:553.07px;">0</div>
<div class="t" style="top:1116.9px;font-size:18.8px;color:#222;line-height:30px;right:352.07px;">0</div>
<div class="t" style="top:1116.9px;font-size:18.8px;color:#222;line-height:30px;letter-spacing:0.237px;left:2324.37px;">0.00 USD</div>
<div class="b" style="left:20px;top:1143px;width:2527px;height:63px;background:#fefefe;"></div>
<div class="b" style="left:20px;top:1142.5px;width:2527px;height:1.3px;background:#e7e9eb;"></div>
<div class="b" style="left:20px;top:1205px;width:2527px;height:1.3px;background:#e7e9eb;"></div>
<div class="t m" style="top:1159.5px;font-size:18.7px;color:#1a1a1a;line-height:30px;letter-spacing:0.612px;left:40.38px;">Tổng cộng 704 chiến dịch</div>
<div class="b" style="left:276px;top:1165.5px;width:18px;height:18px;background:#c9c9c9;border-radius:9px;"></div>
<div class="t" style="top:1159.5px;font-size:13px;color:#fff;line-height:30px;font-weight:700;left:-15px;width:600px;text-align:center;">?</div>
<div class="t" style="top:1159.5px;font-size:18.8px;color:#222;line-height:30px;left:533.87px;">-</div>
<div class="t" style="top:1159.5px;font-size:18.8px;color:#222;line-height:30px;right:1599.37px;">-</div>
<div class="t" style="top:1159.5px;font-size:18.8px;color:#222;line-height:30px;letter-spacing:0.237px;left:1135.37px;">0.00 USD</div>
<div class="t" style="top:1159.5px;font-size:18.8px;color:#222;line-height:30px;right:1126.07px;">0</div>
<div class="t" style="top:1159.5px;font-size:18.8px;color:#222;line-height:30px;right:955.07px;">0</div>
<div class="t" style="top:1159.5px;font-size:18.8px;color:#222;line-height:30px;right:754.07px;">0</div>
<div class="t" style="top:1159.5px;font-size:18.8px;color:#222;line-height:30px;right:553.07px;">0</div>
<div class="t" style="top:1159.5px;font-size:18.8px;color:#222;line-height:30px;right:352.07px;">0</div>
<div class="t" style="top:1159.5px;font-size:18.8px;color:#222;line-height:30px;letter-spacing:0.237px;left:2324.37px;">0.00 USD</div>
<div class="b" style="left:1950px;top:1220px;width:40px;height:40px;background:#f3f3f3;border-radius:5px;"></div>
<svg style="left:1965px;top:1233px" width="9" height="15" viewBox="0 0 9 15"><path d="M7.5 1 L1.5 7.5 L7.5 14" fill="none" stroke="#c6c6c6" stroke-width="1.5"/></svg>
<div class="b" style="left:2003px;top:1220px;width:40.5px;height:40px;background:#fff0f3;border-radius:5px;border:1.5px solid #f5366b;"></div>
<div class="t" style="top:1224.5px;font-size:17.5px;color:#f5366b;line-height:30px;left:1723.5px;width:600px;text-align:center;">1</div>
<div class="b" style="left:2057px;top:1220px;width:40px;height:40px;background:#f3f3f3;border-radius:5px;"></div>
<div class="t" style="top:1224.5px;font-size:17.5px;color:#222;line-height:30px;left:1777px;width:600px;text-align:center;">2</div>
<div class="b" style="left:2110.5px;top:1220px;width:40px;height:40px;background:#f3f3f3;border-radius:5px;"></div>
<div class="t" style="top:1224.5px;font-size:17.5px;color:#222;line-height:30px;left:1830.5px;width:600px;text-align:center;">3</div>
<div class="b" style="left:2164px;top:1220px;width:40px;height:40px;background:#f3f3f3;border-radius:5px;"></div>
<div class="t" style="top:1224.5px;font-size:17.5px;color:#222;line-height:30px;left:1884px;width:600px;text-align:center;">4</div>
<div class="b" style="left:2271px;top:1220px;width:40px;height:40px;background:#f3f3f3;border-radius:5px;"></div>
<div class="t" style="top:1224.5px;font-size:17.5px;color:#222;line-height:30px;left:1991px;width:600px;text-align:center;">36</div>
<div class="b" style="left:2217.5px;top:1220px;width:40px;height:40px;background:#f3f3f3;border-radius:5px;"></div>
<div class="t" style="top:1222.0px;font-size:20px;color:#222;line-height:30px;font-weight:700;left:1937.5px;width:600px;text-align:center;">...</div>
<div class="b" style="left:2325px;top:1220px;width:40px;height:40px;background:#f3f3f3;border-radius:5px;"></div>
<svg style="left:2341px;top:1233px" width="9" height="15" viewBox="0 0 9 15"><path d="M1.5 1 L7.5 7.5 L1.5 14" fill="none" stroke="#333" stroke-width="1.5"/></svg>
<div class="b" style="left:2378.5px;top:1220px;width:147px;height:40px;background:#f3f3f3;border-radius:5px;"></div>
<div class="t" style="top:1224.5px;font-size:17.5px;color:#222;line-height:30px;letter-spacing:0.012px;left:2395.25px;">20/trang</div>
<svg style="left:2495px;top:1234px" width="14" height="9" viewBox="0 0 14 9"><path d="M1 1.5 L7 7.5 L13 1.5" fill="none" stroke="#cfcfcf" stroke-width="1.4"/></svg>
<div class="b" style="left:1891px;top:392.5px;width:321px;height:161.5px;background:#fff;border-radius:6px;box-shadow:0 3px 14px rgba(0,0,0,.10),0 0 2px rgba(0,0,0,.06);"></div>
<div class="b" style="left:1891px;top:392.5px;width:321px;height:44.5px;background:#f4f4f4;border-radius:6px 6px 0 0;"></div>
<div class="t" style="top:401.4px;font-size:18.7px;color:#2a2a2a;line-height:30px;letter-spacing:0.499px;left:1905.88px;">Cột mặc định</div>
<div class="b" style="left:1889px;top:437px;width:323px;height:58px;background:#fff;border-radius:7px;border:3px solid #ee3d3d;"></div>
<div class="t" style="top:446.8px;font-size:18.7px;color:#f5285f;line-height:30px;letter-spacing:0.364px;left:1905.88px;">TikTok Shop Ads</div>
<div class="t" style="top:509.5px;font-size:18.7px;color:#2a2a2a;line-height:30px;letter-spacing:0.543px;left:1905.88px;">Cột tùy chỉnh</div>
<div class="b" style="left:2547px;top:133px;width:12px;height:1138px;background:#f1f2f4;"></div>
<div class="b" style="left:0px;top:1251.8px;width:2559px;height:19.2px;background:#f2f3f5;"></div>
<div class="b" style="left:-5px;top:1244.5px;width:9px;height:9px;background:#1c1c1c;border-radius:5px;"></div>
<div class="b" style="left:2477px;top:1084px;width:58px;height:58px;background:#161616;border-radius:29px;"></div>
<div class="b" style="left:2494.5px;top:1100px;width:25px;height:25px;background:#fff;border-radius:13px;"></div>
<div class="t" style="top:1098.0px;font-size:19px;color:#161616;line-height:30px;font-weight:700;left:2207px;width:600px;text-align:center;">?</div>
<div class="b" style="left:2529px;top:943.5px;width:30px;height:39.5px;background:#fefefe;border-radius:6px 0 0 6px;box-shadow:0 0 3px rgba(0,0,0,.04);"></div>
<div class="b" style="left:2535.2px;top:950px;width:24px;height:26.3px;background:linear-gradient(135deg,#eeeef6 0%,#ebe9f5 55%,#d9c2ee 82%,#c9a2e6 100%);border-radius:3px 0 0 3px;"></div>
<div class="t" style="top:943.5px;font-size:10px;color:#4a4a4a;line-height:30px;font-weight:700;letter-spacing:0.3px;left:2247.8px;width:600px;text-align:center;">&gt;.&lt;</div>
<div class="wm" style="left:6.0px;top:-38.1px;font-size:13.2px;line-height:30px;letter-spacing:0.6px;transform:rotate(-15.3deg);opacity:.88;">Tessa Vo 4840</div>
<div class="wm" style="left:334.0px;top:-38.1px;font-size:13.2px;line-height:30px;letter-spacing:0.6px;transform:rotate(-15.3deg);opacity:.88;">Tessa Vo 4840</div>
<div class="wm" style="left:662.0px;top:-38.1px;font-size:13.2px;line-height:30px;letter-spacing:0.6px;transform:rotate(-15.3deg);opacity:.88;">Tessa Vo 4840</div>
<div class="wm" style="left:990.0px;top:-38.1px;font-size:13.2px;line-height:30px;letter-spacing:0.6px;transform:rotate(-15.3deg);opacity:.88;">Tessa Vo 4840</div>
<div class="wm" style="left:1318.0px;top:-38.1px;font-size:13.2px;line-height:30px;letter-spacing:0.6px;transform:rotate(-15.3deg);opacity:.88;">Tessa Vo 4840</div>
<div class="wm" style="left:1646.0px;top:-38.1px;font-size:13.2px;line-height:30px;letter-spacing:0.6px;transform:rotate(-15.3deg);opacity:.88;">Tessa Vo 4840</div>
<div class="wm" style="left:1974.0px;top:-38.1px;font-size:13.2px;line-height:30px;letter-spacing:0.6px;transform:rotate(-15.3deg);opacity:.88;">Tessa Vo 4840</div>
<div class="wm" style="left:2302.0px;top:-38.1px;font-size:13.2px;line-height:30px;letter-spacing:0.6px;transform:rotate(-15.3deg);opacity:.88;">Tessa Vo 4840</div>
<div class="wm" style="left:167.0px;top:49.5px;font-size:13.2px;line-height:30px;letter-spacing:0.6px;transform:rotate(-15.3deg);opacity:.88;">Tessa Vo 4840</div>
<div class="wm" style="left:495.0px;top:49.5px;font-size:13.2px;line-height:30px;letter-spacing:0.6px;transform:rotate(-15.3deg);opacity:.88;">Tessa Vo 4840</div>
<div class="wm" style="left:823.0px;top:49.5px;font-size:13.2px;line-height:30px;letter-spacing:0.6px;transform:rotate(-15.3deg);opacity:.88;">Tessa Vo 4840</div>
<div class="wm" style="left:1151.0px;top:49.5px;font-size:13.2px;line-height:30px;letter-spacing:0.6px;transform:rotate(-15.3deg);opacity:.88;">Tessa Vo 4840</div>
<div class="wm" style="left:1479.0px;top:49.5px;font-size:13.2px;line-height:30px;letter-spacing:0.6px;transform:rotate(-15.3deg);opacity:.88;">Tessa Vo 4840</div>
<div class="wm" style="left:1807.0px;top:49.5px;font-size:13.2px;line-height:30px;letter-spacing:0.6px;transform:rotate(-15.3deg);opacity:.88;">Tessa Vo 4840</div>
<div class="wm" style="left:2135.0px;top:49.5px;font-size:13.2px;line-height:30px;letter-spacing:0.6px;transform:rotate(-15.3deg);opacity:.88;">Tessa Vo 4840</div>
<div class="wm" style="left:2463.0px;top:49.5px;font-size:13.2px;line-height:30px;letter-spacing:0.6px;transform:rotate(-15.3deg);opacity:.88;">Tessa Vo 4840</div>
<div class="wm" style="left:6.0px;top:137.1px;font-size:13.2px;line-height:30px;letter-spacing:0.6px;transform:rotate(-15.3deg);opacity:.88;">Tessa Vo 4840</div>
<div class="wm" style="left:334.0px;top:137.1px;font-size:13.2px;line-height:30px;letter-spacing:0.6px;transform:rotate(-15.3deg);opacity:.88;">Tessa Vo 4840</div>
<div class="wm" style="left:662.0px;top:137.1px;font-size:13.2px;line-height:30px;letter-spacing:0.6px;transform:rotate(-15.3deg);opacity:.88;">Tessa Vo 4840</div>
<div class="wm" style="left:990.0px;top:137.1px;font-size:13.2px;line-height:30px;letter-spacing:0.6px;transform:rotate(-15.3deg);opacity:.88;">Tessa Vo 4840</div>
<div class="wm" style="left:1318.0px;top:137.1px;font-size:13.2px;line-height:30px;letter-spacing:0.6px;transform:rotate(-15.3deg);opacity:.88;">Tessa Vo 4840</div>
<div class="wm" style="left:1646.0px;top:137.1px;font-size:13.2px;line-height:30px;letter-spacing:0.6px;transform:rotate(-15.3deg);opacity:.88;">Tessa Vo 4840</div>
<div class="wm" style="left:1974.0px;top:137.1px;font-size:13.2px;line-height:30px;letter-spacing:0.6px;transform:rotate(-15.3deg);opacity:.88;">Tessa Vo 4840</div>
<div class="wm" style="left:2302.0px;top:137.1px;font-size:13.2px;line-height:30px;letter-spacing:0.6px;transform:rotate(-15.3deg);opacity:.88;">Tessa Vo 4840</div>
<div class="wm" style="left:167.0px;top:224.7px;font-size:13.2px;line-height:30px;letter-spacing:0.6px;transform:rotate(-15.3deg);opacity:.88;">Tessa Vo 4840</div>
<div class="wm" style="left:495.0px;top:224.7px;font-size:13.2px;line-height:30px;letter-spacing:0.6px;transform:rotate(-15.3deg);opacity:.88;">Tessa Vo 4840</div>
<div class="wm" style="left:823.0px;top:224.7px;font-size:13.2px;line-height:30px;letter-spacing:0.6px;transform:rotate(-15.3deg);opacity:.88;">Tessa Vo 4840</div>
<div class="wm" style="left:1151.0px;top:224.7px;font-size:13.2px;line-height:30px;letter-spacing:0.6px;transform:rotate(-15.3deg);opacity:.88;">Tessa Vo 4840</div>
<div class="wm" style="left:1479.0px;top:224.7px;font-size:13.2px;line-height:30px;letter-spacing:0.6px;transform:rotate(-15.3deg);opacity:.88;">Tessa Vo 4840</div>
<div class="wm" style="left:1807.0px;top:224.7px;font-size:13.2px;line-height:30px;letter-spacing:0.6px;transform:rotate(-15.3deg);opacity:.88;">Tessa Vo 4840</div>
<div class="wm" style="left:2135.0px;top:224.7px;font-size:13.2px;line-height:30px;letter-spacing:0.6px;transform:rotate(-15.3deg);opacity:.88;">Tessa Vo 4840</div>
<div class="wm" style="left:2463.0px;top:224.7px;font-size:13.2px;line-height:30px;letter-spacing:0.6px;transform:rotate(-15.3deg);opacity:.88;">Tessa Vo 4840</div>
<div class="wm" style="left:6.0px;top:312.3px;font-size:13.2px;line-height:30px;letter-spacing:0.6px;transform:rotate(-15.3deg);opacity:.88;">Tessa Vo 4840</div>
<div class="wm" style="left:334.0px;top:312.3px;font-size:13.2px;line-height:30px;letter-spacing:0.6px;transform:rotate(-15.3deg);opacity:.88;">Tessa Vo 4840</div>
<div class="wm" style="left:662.0px;top:312.3px;font-size:13.2px;line-height:30px;letter-spacing:0.6px;transform:rotate(-15.3deg);opacity:.88;">Tessa Vo 4840</div>
<div class="wm" style="left:990.0px;top:312.3px;font-size:13.2px;line-height:30px;letter-spacing:0.6px;transform:rotate(-15.3deg);opacity:.88;">Tessa Vo 4840</div>
<div class="wm" style="left:1318.0px;top:312.3px;font-size:13.2px;line-height:30px;letter-spacing:0.6px;transform:rotate(-15.3deg);opacity:.88;">Tessa Vo 4840</div>
<div class="wm" style="left:1646.0px;top:312.3px;font-size:13.2px;line-height:30px;letter-spacing:0.6px;transform:rotate(-15.3deg);opacity:.88;">Tessa Vo 4840</div>
<div class="wm" style="left:1974.0px;top:312.3px;font-size:13.2px;line-height:30px;letter-spacing:0.6px;transform:rotate(-15.3deg);opacity:.88;">Tessa Vo 4840</div>
<div class="wm" style="left:2302.0px;top:312.3px;font-size:13.2px;line-height:30px;letter-spacing:0.6px;transform:rotate(-15.3deg);opacity:.88;">Tessa Vo 4840</div>
<div class="wm" style="left:167.0px;top:399.9px;font-size:13.2px;line-height:30px;letter-spacing:0.6px;transform:rotate(-15.3deg);opacity:.88;">Tessa Vo 4840</div>
<div class="wm" style="left:495.0px;top:399.9px;font-size:13.2px;line-height:30px;letter-spacing:0.6px;transform:rotate(-15.3deg);opacity:.88;">Tessa Vo 4840</div>
<div class="wm" style="left:823.0px;top:399.9px;font-size:13.2px;line-height:30px;letter-spacing:0.6px;transform:rotate(-15.3deg);opacity:.88;">Tessa Vo 4840</div>
<div class="wm" style="left:1151.0px;top:399.9px;font-size:13.2px;line-height:30px;letter-spacing:0.6px;transform:rotate(-15.3deg);opacity:.88;">Tessa Vo 4840</div>
<div class="wm" style="left:1479.0px;top:399.9px;font-size:13.2px;line-height:30px;letter-spacing:0.6px;transform:rotate(-15.3deg);opacity:.88;">Tessa Vo 4840</div>
<div class="wm" style="left:1807.0px;top:399.9px;font-size:13.2px;line-height:30px;letter-spacing:0.6px;transform:rotate(-15.3deg);opacity:.88;">Tessa Vo 4840</div>
<div class="wm" style="left:2135.0px;top:399.9px;font-size:13.2px;line-height:30px;letter-spacing:0.6px;transform:rotate(-15.3deg);opacity:.88;">Tessa Vo 4840</div>
<div class="wm" style="left:2463.0px;top:399.9px;font-size:13.2px;line-height:30px;letter-spacing:0.6px;transform:rotate(-15.3deg);opacity:.88;">Tessa Vo 4840</div>
<div class="wm" style="left:6.0px;top:487.5px;font-size:13.2px;line-height:30px;letter-spacing:0.6px;transform:rotate(-15.3deg);opacity:.88;">Tessa Vo 4840</div>
<div class="wm" style="left:334.0px;top:487.5px;font-size:13.2px;line-height:30px;letter-spacing:0.6px;transform:rotate(-15.3deg);opacity:.88;">Tessa Vo 4840</div>
<div class="wm" style="left:662.0px;top:487.5px;font-size:13.2px;line-height:30px;letter-spacing:0.6px;transform:rotate(-15.3deg);opacity:.88;">Tessa Vo 4840</div>
<div class="wm" style="left:990.0px;top:487.5px;font-size:13.2px;line-height:30px;letter-spacing:0.6px;transform:rotate(-15.3deg);opacity:.88;">Tessa Vo 4840</div>
<div class="wm" style="left:1318.0px;top:487.5px;font-size:13.2px;line-height:30px;letter-spacing:0.6px;transform:rotate(-15.3deg);opacity:.88;">Tessa Vo 4840</div>
<div class="wm" style="left:1646.0px;top:487.5px;font-size:13.2px;line-height:30px;letter-spacing:0.6px;transform:rotate(-15.3deg);opacity:.88;">Tessa Vo 4840</div>
<div class="wm" style="left:1974.0px;top:487.5px;font-size:13.2px;line-height:30px;letter-spacing:0.6px;transform:rotate(-15.3deg);opacity:.88;">Tessa Vo 4840</div>
<div class="wm" style="left:2302.0px;top:487.5px;font-size:13.2px;line-height:30px;letter-spacing:0.6px;transform:rotate(-15.3deg);opacity:.88;">Tessa Vo 4840</div>
<div class="wm" style="left:167.0px;top:575.1px;font-size:13.2px;line-height:30px;letter-spacing:0.6px;transform:rotate(-15.3deg);opacity:.88;">Tessa Vo 4840</div>
<div class="wm" style="left:495.0px;top:575.1px;font-size:13.2px;line-height:30px;letter-spacing:0.6px;transform:rotate(-15.3deg);opacity:.88;">Tessa Vo 4840</div>
<div class="wm" style="left:823.0px;top:575.1px;font-size:13.2px;line-height:30px;letter-spacing:0.6px;transform:rotate(-15.3deg);opacity:.88;">Tessa Vo 4840</div>
<div class="wm" style="left:1151.0px;top:575.1px;font-size:13.2px;line-height:30px;letter-spacing:0.6px;transform:rotate(-15.3deg);opacity:.88;">Tessa Vo 4840</div>
<div class="wm" style="left:1479.0px;top:575.1px;font-size:13.2px;line-height:30px;letter-spacing:0.6px;transform:rotate(-15.3deg);opacity:.88;">Tessa Vo 4840</div>
<div class="wm" style="left:1807.0px;top:575.1px;font-size:13.2px;line-height:30px;letter-spacing:0.6px;transform:rotate(-15.3deg);opacity:.88;">Tessa Vo 4840</div>
<div class="wm" style="left:2135.0px;top:575.1px;font-size:13.2px;line-height:30px;letter-spacing:0.6px;transform:rotate(-15.3deg);opacity:.88;">Tessa Vo 4840</div>
<div class="wm" style="left:2463.0px;top:575.1px;font-size:13.2px;line-height:30px;letter-spacing:0.6px;transform:rotate(-15.3deg);opacity:.88;">Tessa Vo 4840</div>
<div class="wm" style="left:6.0px;top:662.7px;font-size:13.2px;line-height:30px;letter-spacing:0.6px;transform:rotate(-15.3deg);opacity:.88;">Tessa Vo 4840</div>
<div class="wm" style="left:334.0px;top:662.7px;font-size:13.2px;line-height:30px;letter-spacing:0.6px;transform:rotate(-15.3deg);opacity:.88;">Tessa Vo 4840</div>
<div class="wm" style="left:662.0px;top:662.7px;font-size:13.2px;line-height:30px;letter-spacing:0.6px;transform:rotate(-15.3deg);opacity:.88;">Tessa Vo 4840</div>
<div class="wm" style="left:990.0px;top:662.7px;font-size:13.2px;line-height:30px;letter-spacing:0.6px;transform:rotate(-15.3deg);opacity:.88;">Tessa Vo 4840</div>
<div class="wm" style="left:1318.0px;top:662.7px;font-size:13.2px;line-height:30px;letter-spacing:0.6px;transform:rotate(-15.3deg);opacity:.88;">Tessa Vo 4840</div>
<div class="wm" style="left:1646.0px;top:662.7px;font-size:13.2px;line-height:30px;letter-spacing:0.6px;transform:rotate(-15.3deg);opacity:.88;">Tessa Vo 4840</div>
<div class="wm" style="left:1974.0px;top:662.7px;font-size:13.2px;line-height:30px;letter-spacing:0.6px;transform:rotate(-15.3deg);opacity:.88;">Tessa Vo 4840</div>
<div class="wm" style="left:2302.0px;top:662.7px;font-size:13.2px;line-height:30px;letter-spacing:0.6px;transform:rotate(-15.3deg);opacity:.88;">Tessa Vo 4840</div>
<div class="wm" style="left:167.0px;top:750.3px;font-size:13.2px;line-height:30px;letter-spacing:0.6px;transform:rotate(-15.3deg);opacity:.88;">Tessa Vo 4840</div>
<div class="wm" style="left:495.0px;top:750.3px;font-size:13.2px;line-height:30px;letter-spacing:0.6px;transform:rotate(-15.3deg);opacity:.88;">Tessa Vo 4840</div>
<div class="wm" style="left:823.0px;top:750.3px;font-size:13.2px;line-height:30px;letter-spacing:0.6px;transform:rotate(-15.3deg);opacity:.88;">Tessa Vo 4840</div>
<div class="wm" style="left:1151.0px;top:750.3px;font-size:13.2px;line-height:30px;letter-spacing:0.6px;transform:rotate(-15.3deg);opacity:.88;">Tessa Vo 4840</div>
<div class="wm" style="left:1479.0px;top:750.3px;font-size:13.2px;line-height:30px;letter-spacing:0.6px;transform:rotate(-15.3deg);opacity:.88;">Tessa Vo 4840</div>
<div class="wm" style="left:1807.0px;top:750.3px;font-size:13.2px;line-height:30px;letter-spacing:0.6px;transform:rotate(-15.3deg);opacity:.88;">Tessa Vo 4840</div>
<div class="wm" style="left:2135.0px;top:750.3px;font-size:13.2px;line-height:30px;letter-spacing:0.6px;transform:rotate(-15.3deg);opacity:.88;">Tessa Vo 4840</div>
<div class="wm" style="left:2463.0px;top:750.3px;font-size:13.2px;line-height:30px;letter-spacing:0.6px;transform:rotate(-15.3deg);opacity:.88;">Tessa Vo 4840</div>
<div class="wm" style="left:6.0px;top:837.9px;font-size:13.2px;line-height:30px;letter-spacing:0.6px;transform:rotate(-15.3deg);opacity:.88;">Tessa Vo 4840</div>
<div class="wm" style="left:334.0px;top:837.9px;font-size:13.2px;line-height:30px;letter-spacing:0.6px;transform:rotate(-15.3deg);opacity:.88;">Tessa Vo 4840</div>
<div class="wm" style="left:662.0px;top:837.9px;font-size:13.2px;line-height:30px;letter-spacing:0.6px;transform:rotate(-15.3deg);opacity:.88;">Tessa Vo 4840</div>
<div class="wm" style="left:990.0px;top:837.9px;font-size:13.2px;line-height:30px;letter-spacing:0.6px;transform:rotate(-15.3deg);opacity:.88;">Tessa Vo 4840</div>
<div class="wm" style="left:1318.0px;top:837.9px;font-size:13.2px;line-height:30px;letter-spacing:0.6px;transform:rotate(-15.3deg);opacity:.88;">Tessa Vo 4840</div>
<div class="wm" style="left:1646.0px;top:837.9px;font-size:13.2px;line-height:30px;letter-spacing:0.6px;transform:rotate(-15.3deg);opacity:.88;">Tessa Vo 4840</div>
<div class="wm" style="left:1974.0px;top:837.9px;font-size:13.2px;line-height:30px;letter-spacing:0.6px;transform:rotate(-15.3deg);opacity:.88;">Tessa Vo 4840</div>
<div class="wm" style="left:2302.0px;top:837.9px;font-size:13.2px;line-height:30px;letter-spacing:0.6px;transform:rotate(-15.3deg);opacity:.88;">Tessa Vo 4840</div>
<div class="wm" style="left:167.0px;top:925.5px;font-size:13.2px;line-height:30px;letter-spacing:0.6px;transform:rotate(-15.3deg);opacity:.88;">Tessa Vo 4840</div>
<div class="wm" style="left:495.0px;top:925.5px;font-size:13.2px;line-height:30px;letter-spacing:0.6px;transform:rotate(-15.3deg);opacity:.88;">Tessa Vo 4840</div>
<div class="wm" style="left:823.0px;top:925.5px;font-size:13.2px;line-height:30px;letter-spacing:0.6px;transform:rotate(-15.3deg);opacity:.88;">Tessa Vo 4840</div>
<div class="wm" style="left:1151.0px;top:925.5px;font-size:13.2px;line-height:30px;letter-spacing:0.6px;transform:rotate(-15.3deg);opacity:.88;">Tessa Vo 4840</div>
<div class="wm" style="left:1479.0px;top:925.5px;font-size:13.2px;line-height:30px;letter-spacing:0.6px;transform:rotate(-15.3deg);opacity:.88;">Tessa Vo 4840</div>
<div class="wm" style="left:1807.0px;top:925.5px;font-size:13.2px;line-height:30px;letter-spacing:0.6px;transform:rotate(-15.3deg);opacity:.88;">Tessa Vo 4840</div>
<div class="wm" style="left:2135.0px;top:925.5px;font-size:13.2px;line-height:30px;letter-spacing:0.6px;transform:rotate(-15.3deg);opacity:.88;">Tessa Vo 4840</div>
<div class="wm" style="left:2463.0px;top:925.5px;font-size:13.2px;line-height:30px;letter-spacing:0.6px;transform:rotate(-15.3deg);opacity:.88;">Tessa Vo 4840</div>
<div class="wm" style="left:6.0px;top:1013.1px;font-size:13.2px;line-height:30px;letter-spacing:0.6px;transform:rotate(-15.3deg);opacity:.88;">Tessa Vo 4840</div>
<div class="wm" style="left:334.0px;top:1013.1px;font-size:13.2px;line-height:30px;letter-spacing:0.6px;transform:rotate(-15.3deg);opacity:.88;">Tessa Vo 4840</div>
<div class="wm" style="left:662.0px;top:1013.1px;font-size:13.2px;line-height:30px;letter-spacing:0.6px;transform:rotate(-15.3deg);opacity:.88;">Tessa Vo 4840</div>
<div class="wm" style="left:990.0px;top:1013.1px;font-size:13.2px;line-height:30px;letter-spacing:0.6px;transform:rotate(-15.3deg);opacity:.88;">Tessa Vo 4840</div>
<div class="wm" style="left:1318.0px;top:1013.1px;font-size:13.2px;line-height:30px;letter-spacing:0.6px;transform:rotate(-15.3deg);opacity:.88;">Tessa Vo 4840</div>
<div class="wm" style="left:1646.0px;top:1013.1px;font-size:13.2px;line-height:30px;letter-spacing:0.6px;transform:rotate(-15.3deg);opacity:.88;">Tessa Vo 4840</div>
<div class="wm" style="left:1974.0px;top:1013.1px;font-size:13.2px;line-height:30px;letter-spacing:0.6px;transform:rotate(-15.3deg);opacity:.88;">Tessa Vo 4840</div>
<div class="wm" style="left:2302.0px;top:1013.1px;font-size:13.2px;line-height:30px;letter-spacing:0.6px;transform:rotate(-15.3deg);opacity:.88;">Tessa Vo 4840</div>
<div class="wm" style="left:167.0px;top:1100.7px;font-size:13.2px;line-height:30px;letter-spacing:0.6px;transform:rotate(-15.3deg);opacity:.88;">Tessa Vo 4840</div>
<div class="wm" style="left:495.0px;top:1100.7px;font-size:13.2px;line-height:30px;letter-spacing:0.6px;transform:rotate(-15.3deg);opacity:.88;">Tessa Vo 4840</div>
<div class="wm" style="left:823.0px;top:1100.7px;font-size:13.2px;line-height:30px;letter-spacing:0.6px;transform:rotate(-15.3deg);opacity:.88;">Tessa Vo 4840</div>
<div class="wm" style="left:1151.0px;top:1100.7px;font-size:13.2px;line-height:30px;letter-spacing:0.6px;transform:rotate(-15.3deg);opacity:.88;">Tessa Vo 4840</div>
<div class="wm" style="left:1479.0px;top:1100.7px;font-size:13.2px;line-height:30px;letter-spacing:0.6px;transform:rotate(-15.3deg);opacity:.88;">Tessa Vo 4840</div>
<div class="wm" style="left:1807.0px;top:1100.7px;font-size:13.2px;line-height:30px;letter-spacing:0.6px;transform:rotate(-15.3deg);opacity:.88;">Tessa Vo 4840</div>
<div class="wm" style="left:2135.0px;top:1100.7px;font-size:13.2px;line-height:30px;letter-spacing:0.6px;transform:rotate(-15.3deg);opacity:.88;">Tessa Vo 4840</div>
<div class="wm" style="left:2463.0px;top:1100.7px;font-size:13.2px;line-height:30px;letter-spacing:0.6px;transform:rotate(-15.3deg);opacity:.88;">Tessa Vo 4840</div>
<div class="wm" style="left:6.0px;top:1188.3px;font-size:13.2px;line-height:30px;letter-spacing:0.6px;transform:rotate(-15.3deg);opacity:.88;">Tessa Vo 4840</div>
<div class="wm" style="left:334.0px;top:1188.3px;font-size:13.2px;line-height:30px;letter-spacing:0.6px;transform:rotate(-15.3deg);opacity:.88;">Tessa Vo 4840</div>
<div class="wm" style="left:662.0px;top:1188.3px;font-size:13.2px;line-height:30px;letter-spacing:0.6px;transform:rotate(-15.3deg);opacity:.88;">Tessa Vo 4840</div>
<div class="wm" style="left:990.0px;top:1188.3px;font-size:13.2px;line-height:30px;letter-spacing:0.6px;transform:rotate(-15.3deg);opacity:.88;">Tessa Vo 4840</div>
<div class="wm" style="left:1318.0px;top:1188.3px;font-size:13.2px;line-height:30px;letter-spacing:0.6px;transform:rotate(-15.3deg);opacity:.88;">Tessa Vo 4840</div>
<div class="wm" style="left:1646.0px;top:1188.3px;font-size:13.2px;line-height:30px;letter-spacing:0.6px;transform:rotate(-15.3deg);opacity:.88;">Tessa Vo 4840</div>
<div class="wm" style="left:1974.0px;top:1188.3px;font-size:13.2px;line-height:30px;letter-spacing:0.6px;transform:rotate(-15.3deg);opacity:.88;">Tessa Vo 4840</div>
<div class="wm" style="left:2302.0px;top:1188.3px;font-size:13.2px;line-height:30px;letter-spacing:0.6px;transform:rotate(-15.3deg);opacity:.88;">Tessa Vo 4840</div>
<div class="wm" style="left:167.0px;top:1275.9px;font-size:13.2px;line-height:30px;letter-spacing:0.6px;transform:rotate(-15.3deg);opacity:.88;">Tessa Vo 4840</div>
<div class="wm" style="left:495.0px;top:1275.9px;font-size:13.2px;line-height:30px;letter-spacing:0.6px;transform:rotate(-15.3deg);opacity:.88;">Tessa Vo 4840</div>
<div class="wm" style="left:823.0px;top:1275.9px;font-size:13.2px;line-height:30px;letter-spacing:0.6px;transform:rotate(-15.3deg);opacity:.88;">Tessa Vo 4840</div>
<div class="wm" style="left:1151.0px;top:1275.9px;font-size:13.2px;line-height:30px;letter-spacing:0.6px;transform:rotate(-15.3deg);opacity:.88;">Tessa Vo 4840</div>
<div class="wm" style="left:1479.0px;top:1275.9px;font-size:13.2px;line-height:30px;letter-spacing:0.6px;transform:rotate(-15.3deg);opacity:.88;">Tessa Vo 4840</div>
<div class="wm" style="left:1807.0px;top:1275.9px;font-size:13.2px;line-height:30px;letter-spacing:0.6px;transform:rotate(-15.3deg);opacity:.88;">Tessa Vo 4840</div>
<div class="wm" style="left:2135.0px;top:1275.9px;font-size:13.2px;line-height:30px;letter-spacing:0.6px;transform:rotate(-15.3deg);opacity:.88;">Tessa Vo 4840</div>
<div class="wm" style="left:2463.0px;top:1275.9px;font-size:13.2px;line-height:30px;letter-spacing:0.6px;transform:rotate(-15.3deg);opacity:.88;">Tessa Vo 4840</div>
<div class="wm" style="left:6.0px;top:1363.5px;font-size:13.2px;line-height:30px;letter-spacing:0.6px;transform:rotate(-15.3deg);opacity:.88;">Tessa Vo 4840</div>
<div class="wm" style="left:334.0px;top:1363.5px;font-size:13.2px;line-height:30px;letter-spacing:0.6px;transform:rotate(-15.3deg);opacity:.88;">Tessa Vo 4840</div>
<div class="wm" style="left:662.0px;top:1363.5px;font-size:13.2px;line-height:30px;letter-spacing:0.6px;transform:rotate(-15.3deg);opacity:.88;">Tessa Vo 4840</div>
<div class="wm" style="left:990.0px;top:1363.5px;font-size:13.2px;line-height:30px;letter-spacing:0.6px;transform:rotate(-15.3deg);opacity:.88;">Tessa Vo 4840</div>
<div class="wm" style="left:1318.0px;top:1363.5px;font-size:13.2px;line-height:30px;letter-spacing:0.6px;transform:rotate(-15.3deg);opacity:.88;">Tessa Vo 4840</div>
<div class="wm" style="left:1646.0px;top:1363.5px;font-size:13.2px;line-height:30px;letter-spacing:0.6px;transform:rotate(-15.3deg);opacity:.88;">Tessa Vo 4840</div>
<div class="wm" style="left:1974.0px;top:1363.5px;font-size:13.2px;line-height:30px;letter-spacing:0.6px;transform:rotate(-15.3deg);opacity:.88;">Tessa Vo 4840</div>
<div class="wm" style="left:2302.0px;top:1363.5px;font-size:13.2px;line-height:30px;letter-spacing:0.6px;transform:rotate(-15.3deg);opacity:.88;">Tessa Vo 4840</div>
<div class="wm" style="left:-237.6px;top:-111.8px;font-size:19.3px;line-height:30px;letter-spacing:-0.02px;transform:rotate(-23deg);opacity:.82;">6832164098751972358</div>
<div class="wm" style="left:57.7px;top:-111.8px;font-size:19.3px;line-height:30px;letter-spacing:-0.02px;transform:rotate(-23deg);opacity:.82;">6832164098751972358</div>
<div class="wm" style="left:353.0px;top:-111.8px;font-size:19.3px;line-height:30px;letter-spacing:-0.02px;transform:rotate(-23deg);opacity:.82;">6832164098751972358</div>
<div class="wm" style="left:648.3px;top:-111.8px;font-size:19.3px;line-height:30px;letter-spacing:-0.02px;transform:rotate(-23deg);opacity:.82;">6832164098751972358</div>
<div class="wm" style="left:943.6px;top:-111.8px;font-size:19.3px;line-height:30px;letter-spacing:-0.02px;transform:rotate(-23deg);opacity:.82;">6832164098751972358</div>
<div class="wm" style="left:1238.9px;top:-111.8px;font-size:19.3px;line-height:30px;letter-spacing:-0.02px;transform:rotate(-23deg);opacity:.82;">6832164098751972358</div>
<div class="wm" style="left:1534.2px;top:-111.8px;font-size:19.3px;line-height:30px;letter-spacing:-0.02px;transform:rotate(-23deg);opacity:.82;">6832164098751972358</div>
<div class="wm" style="left:1829.5px;top:-111.8px;font-size:19.3px;line-height:30px;letter-spacing:-0.02px;transform:rotate(-23deg);opacity:.82;">6832164098751972358</div>
<div class="wm" style="left:2124.8px;top:-111.8px;font-size:19.3px;line-height:30px;letter-spacing:-0.02px;transform:rotate(-23deg);opacity:.82;">6832164098751972358</div>
<div class="wm" style="left:2420.1px;top:-111.8px;font-size:19.3px;line-height:30px;letter-spacing:-0.02px;transform:rotate(-23deg);opacity:.82;">6832164098751972358</div>
<div class="wm" style="left:2715.4px;top:-111.8px;font-size:19.3px;line-height:30px;letter-spacing:-0.02px;transform:rotate(-23deg);opacity:.82;">6832164098751972358</div>
<div class="wm" style="left:-237.6px;top:183.5px;font-size:19.3px;line-height:30px;letter-spacing:-0.02px;transform:rotate(-23deg);opacity:.82;">6832164098751972358</div>
<div class="wm" style="left:57.7px;top:183.5px;font-size:19.3px;line-height:30px;letter-spacing:-0.02px;transform:rotate(-23deg);opacity:.82;">6832164098751972358</div>
<div class="wm" style="left:353.0px;top:183.5px;font-size:19.3px;line-height:30px;letter-spacing:-0.02px;transform:rotate(-23deg);opacity:.82;">6832164098751972358</div>
<div class="wm" style="left:648.3px;top:183.5px;font-size:19.3px;line-height:30px;letter-spacing:-0.02px;transform:rotate(-23deg);opacity:.82;">6832164098751972358</div>
<div class="wm" style="left:943.6px;top:183.5px;font-size:19.3px;line-height:30px;letter-spacing:-0.02px;transform:rotate(-23deg);opacity:.82;">6832164098751972358</div>
<div class="wm" style="left:1238.9px;top:183.5px;font-size:19.3px;line-height:30px;letter-spacing:-0.02px;transform:rotate(-23deg);opacity:.82;">6832164098751972358</div>
<div class="wm" style="left:1534.2px;top:183.5px;font-size:19.3px;line-height:30px;letter-spacing:-0.02px;transform:rotate(-23deg);opacity:.82;">6832164098751972358</div>
<div class="wm" style="left:1829.5px;top:183.5px;font-size:19.3px;line-height:30px;letter-spacing:-0.02px;transform:rotate(-23deg);opacity:.82;">6832164098751972358</div>
<div class="wm" style="left:2124.8px;top:183.5px;font-size:19.3px;line-height:30px;letter-spacing:-0.02px;transform:rotate(-23deg);opacity:.82;">6832164098751972358</div>
<div class="wm" style="left:2420.1px;top:183.5px;font-size:19.3px;line-height:30px;letter-spacing:-0.02px;transform:rotate(-23deg);opacity:.82;">6832164098751972358</div>
<div class="wm" style="left:2715.4px;top:183.5px;font-size:19.3px;line-height:30px;letter-spacing:-0.02px;transform:rotate(-23deg);opacity:.82;">6832164098751972358</div>
<div class="wm" style="left:-237.6px;top:478.8px;font-size:19.3px;line-height:30px;letter-spacing:-0.02px;transform:rotate(-23deg);opacity:.82;">6832164098751972358</div>
<div class="wm" style="left:57.7px;top:478.8px;font-size:19.3px;line-height:30px;letter-spacing:-0.02px;transform:rotate(-23deg);opacity:.82;">6832164098751972358</div>
<div class="wm" style="left:353.0px;top:478.8px;font-size:19.3px;line-height:30px;letter-spacing:-0.02px;transform:rotate(-23deg);opacity:.82;">6832164098751972358</div>
<div class="wm" style="left:648.3px;top:478.8px;font-size:19.3px;line-height:30px;letter-spacing:-0.02px;transform:rotate(-23deg);opacity:.82;">6832164098751972358</div>
<div class="wm" style="left:943.6px;top:478.8px;font-size:19.3px;line-height:30px;letter-spacing:-0.02px;transform:rotate(-23deg);opacity:.82;">6832164098751972358</div>
<div class="wm" style="left:1238.9px;top:478.8px;font-size:19.3px;line-height:30px;letter-spacing:-0.02px;transform:rotate(-23deg);opacity:.82;">6832164098751972358</div>
<div class="wm" style="left:1534.2px;top:478.8px;font-size:19.3px;line-height:30px;letter-spacing:-0.02px;transform:rotate(-23deg);opacity:.82;">6832164098751972358</div>
<div class="wm" style="left:1829.5px;top:478.8px;font-size:19.3px;line-height:30px;letter-spacing:-0.02px;transform:rotate(-23deg);opacity:.82;">6832164098751972358</div>
<div class="wm" style="left:2124.8px;top:478.8px;font-size:19.3px;line-height:30px;letter-spacing:-0.02px;transform:rotate(-23deg);opacity:.82;">6832164098751972358</div>
<div class="wm" style="left:2420.1px;top:478.8px;font-size:19.3px;line-height:30px;letter-spacing:-0.02px;transform:rotate(-23deg);opacity:.82;">6832164098751972358</div>
<div class="wm" style="left:2715.4px;top:478.8px;font-size:19.3px;line-height:30px;letter-spacing:-0.02px;transform:rotate(-23deg);opacity:.82;">6832164098751972358</div>
<div class="wm" style="left:-237.6px;top:774.1px;font-size:19.3px;line-height:30px;letter-spacing:-0.02px;transform:rotate(-23deg);opacity:.82;">6832164098751972358</div>
<div class="wm" style="left:57.7px;top:774.1px;font-size:19.3px;line-height:30px;letter-spacing:-0.02px;transform:rotate(-23deg);opacity:.82;">6832164098751972358</div>
<div class="wm" style="left:353.0px;top:774.1px;font-size:19.3px;line-height:30px;letter-spacing:-0.02px;transform:rotate(-23deg);opacity:.82;">6832164098751972358</div>
<div class="wm" style="left:648.3px;top:774.1px;font-size:19.3px;line-height:30px;letter-spacing:-0.02px;transform:rotate(-23deg);opacity:.82;">6832164098751972358</div>
<div class="wm" style="left:943.6px;top:774.1px;font-size:19.3px;line-height:30px;letter-spacing:-0.02px;transform:rotate(-23deg);opacity:.82;">6832164098751972358</div>
<div class="wm" style="left:1238.9px;top:774.1px;font-size:19.3px;line-height:30px;letter-spacing:-0.02px;transform:rotate(-23deg);opacity:.82;">6832164098751972358</div>
<div class="wm" style="left:1534.2px;top:774.1px;font-size:19.3px;line-height:30px;letter-spacing:-0.02px;transform:rotate(-23deg);opacity:.82;">6832164098751972358</div>
<div class="wm" style="left:1829.5px;top:774.1px;font-size:19.3px;line-height:30px;letter-spacing:-0.02px;transform:rotate(-23deg);opacity:.82;">6832164098751972358</div>
<div class="wm" style="left:2124.8px;top:774.1px;font-size:19.3px;line-height:30px;letter-spacing:-0.02px;transform:rotate(-23deg);opacity:.82;">6832164098751972358</div>
<div class="wm" style="left:2420.1px;top:774.1px;font-size:19.3px;line-height:30px;letter-spacing:-0.02px;transform:rotate(-23deg);opacity:.82;">6832164098751972358</div>
<div class="wm" style="left:2715.4px;top:774.1px;font-size:19.3px;line-height:30px;letter-spacing:-0.02px;transform:rotate(-23deg);opacity:.82;">6832164098751972358</div>
<div class="wm" style="left:-237.6px;top:1069.4px;font-size:19.3px;line-height:30px;letter-spacing:-0.02px;transform:rotate(-23deg);opacity:.82;">6832164098751972358</div>
<div class="wm" style="left:57.7px;top:1069.4px;font-size:19.3px;line-height:30px;letter-spacing:-0.02px;transform:rotate(-23deg);opacity:.82;">6832164098751972358</div>
<div class="wm" style="left:353.0px;top:1069.4px;font-size:19.3px;line-height:30px;letter-spacing:-0.02px;transform:rotate(-23deg);opacity:.82;">6832164098751972358</div>
<div class="wm" style="left:648.3px;top:1069.4px;font-size:19.3px;line-height:30px;letter-spacing:-0.02px;transform:rotate(-23deg);opacity:.82;">6832164098751972358</div>
<div class="wm" style="left:943.6px;top:1069.4px;font-size:19.3px;line-height:30px;letter-spacing:-0.02px;transform:rotate(-23deg);opacity:.82;">6832164098751972358</div>
<div class="wm" style="left:1238.9px;top:1069.4px;font-size:19.3px;line-height:30px;letter-spacing:-0.02px;transform:rotate(-23deg);opacity:.82;">6832164098751972358</div>
<div class="wm" style="left:1534.2px;top:1069.4px;font-size:19.3px;line-height:30px;letter-spacing:-0.02px;transform:rotate(-23deg);opacity:.82;">6832164098751972358</div>
<div class="wm" style="left:1829.5px;top:1069.4px;font-size:19.3px;line-height:30px;letter-spacing:-0.02px;transform:rotate(-23deg);opacity:.82;">6832164098751972358</div>
<div class="wm" style="left:2124.8px;top:1069.4px;font-size:19.3px;line-height:30px;letter-spacing:-0.02px;transform:rotate(-23deg);opacity:.82;">6832164098751972358</div>
<div class="wm" style="left:2420.1px;top:1069.4px;font-size:19.3px;line-height:30px;letter-spacing:-0.02px;transform:rotate(-23deg);opacity:.82;">6832164098751972358</div>
<div class="wm" style="left:2715.4px;top:1069.4px;font-size:19.3px;line-height:30px;letter-spacing:-0.02px;transform:rotate(-23deg);opacity:.82;">6832164098751972358</div>
<div class="wm" style="left:-237.6px;top:1364.7px;font-size:19.3px;line-height:30px;letter-spacing:-0.02px;transform:rotate(-23deg);opacity:.82;">6832164098751972358</div>
<div class="wm" style="left:57.7px;top:1364.7px;font-size:19.3px;line-height:30px;letter-spacing:-0.02px;transform:rotate(-23deg);opacity:.82;">6832164098751972358</div>
<div class="wm" style="left:353.0px;top:1364.7px;font-size:19.3px;line-height:30px;letter-spacing:-0.02px;transform:rotate(-23deg);opacity:.82;">6832164098751972358</div>
<div class="wm" style="left:648.3px;top:1364.7px;font-size:19.3px;line-height:30px;letter-spacing:-0.02px;transform:rotate(-23deg);opacity:.82;">6832164098751972358</div>
<div class="wm" style="left:943.6px;top:1364.7px;font-size:19.3px;line-height:30px;letter-spacing:-0.02px;transform:rotate(-23deg);opacity:.82;">6832164098751972358</div>
<div class="wm" style="left:1238.9px;top:1364.7px;font-size:19.3px;line-height:30px;letter-spacing:-0.02px;transform:rotate(-23deg);opacity:.82;">6832164098751972358</div>
<div class="wm" style="left:1534.2px;top:1364.7px;font-size:19.3px;line-height:30px;letter-spacing:-0.02px;transform:rotate(-23deg);opacity:.82;">6832164098751972358</div>
<div class="wm" style="left:1829.5px;top:1364.7px;font-size:19.3px;line-height:30px;letter-spacing:-0.02px;transform:rotate(-23deg);opacity:.82;">6832164098751972358</div>
<div class="wm" style="left:2124.8px;top:1364.7px;font-size:19.3px;line-height:30px;letter-spacing:-0.02px;transform:rotate(-23deg);opacity:.82;">6832164098751972358</div>
<div class="wm" style="left:2420.1px;top:1364.7px;font-size:19.3px;line-height:30px;letter-spacing:-0.02px;transform:rotate(-23deg);opacity:.82;">6832164098751972358</div>
<div class="wm" style="left:2715.4px;top:1364.7px;font-size:19.3px;line-height:30px;letter-spacing:-0.02px;transform:rotate(-23deg);opacity:.82;">6832164098751972358</div>
<div class="b" style="left:180px;top:673px;width:222px;height:15.5px;background:#fafafa;"></div>
<div class="b" style="left:180px;top:688.5px;width:248px;height:28px;background:#f6f6f6;"></div>
<div class="b" style="left:201px;top:688.5px;width:201.5px;height:28px;background:#ebebeb;"></div>
<div class="b" style="left:201px;top:688.5px;width:40px;height:28px;background:#e2e2e2;"></div>
<div class="b" style="left:182px;top:748px;width:303px;height:21.5px;background:#fafafa;"></div>
<div class="b" style="left:182px;top:769.5px;width:301px;height:12.5px;background:#f6f6f6;"></div>
<div class="b" style="left:201px;top:769.5px;width:242px;height:12.5px;background:#ebebeb;"></div>
<div class="b" style="left:175px;top:822px;width:308px;height:33.5px;background:#f8f8f8;"></div>
<div class="b" style="left:201px;top:822px;width:242px;height:33.5px;background:#f0f0f0;"></div>
<div class="b" style="left:201px;top:822px;width:40px;height:29px;background:#ededed;"></div>
<div class="b" style="left:176px;top:896px;width:266.5px;height:35px;background:#f7f7f7;"></div>
<div class="b" style="left:201px;top:896px;width:241.5px;height:35px;background:#ececec;"></div>
<div class="b" style="left:201px;top:896px;width:80px;height:35px;background:#e4e4e4;"></div>
<div class="b" style="left:241px;top:896px;width:40px;height:35px;background:#e1e1e1;"></div>
<div class="b" style="left:178.5px;top:972.5px;width:264px;height:36.5px;background:#f7f7f7;"></div>
<div class="b" style="left:201px;top:972.5px;width:241.5px;height:36.5px;background:#ececec;"></div>
<div class="b" style="left:201px;top:972.5px;width:80px;height:36.5px;background:#e5e5e5;"></div>
<div class="b" style="left:241px;top:972.5px;width:40px;height:36.5px;background:#e0e0e0;"></div>
</body></html>
